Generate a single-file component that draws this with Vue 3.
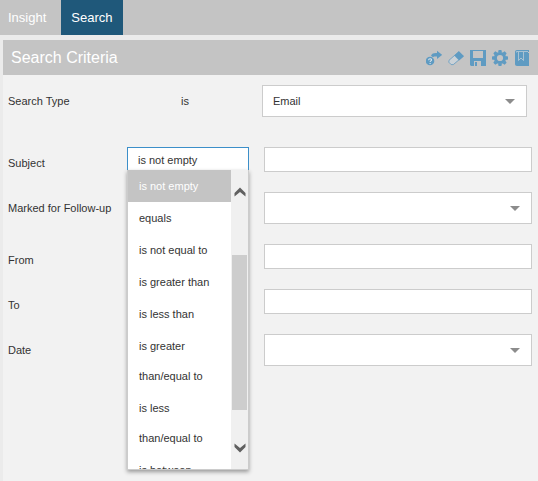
<script setup>
import { ref } from 'vue'

const tabs = ['Insight', 'Search']
const activeTab = ref('Search')
const operators = [
  'is not empty',
  'equals',
  'is not equal to',
  'is greater than',
  'is less than',
  'is greater\nthan/equal to',
  'is less\nthan/equal to',
  'is between',
]
const operator = ref('is not empty')
const searchType = ref('Email')
const fields = ref([
  { id: 'subject', label: 'Subject', kind: 'text', value: '', operator: true },
  { id: 'followup', label: 'Marked for Follow-up', kind: 'select', value: '' },
  { id: 'from', label: 'From', kind: 'text', value: '' },
  { id: 'to', label: 'To', kind: 'text', value: '' },
  { id: 'date', label: 'Date', kind: 'select', value: '' },
])
const list = ref(null)
const scroll = (step) => list.value.scrollBy(0, step)
const teeth = [0, 45, 90, 135, 180, 225, 270, 315]
</script>

<template>
  <div class="page">
    <nav class="tabs">
      <button
        v-for="tab in tabs"
        :key="tab"
        type="button"
        class="tab"
        :class="{ active: tab === activeTab }"
        @click="activeTab = tab"
      >{{ tab }}</button>
    </nav>

    <main class="panel">
      <header class="panel-head">
        <h1>Search Criteria</h1>
        <div class="tools">
          <button type="button" class="tool" aria-label="Run query">
            <svg viewBox="0 0 16 16">
              <circle cx="4" cy="11" r="4.300" fill="#5f9bc2" />
              <path d="M2.600 10.200c0-2 2.900-1.800 2.900-.3 0 .9-1.400 1-1.400 2M4.100 12.900v1" fill="none" stroke="#dce5eb" stroke-width="1.100" />
              <path d="M5 5.800C5.800 3.600 7.300 3 10 3h1V.8l5.200 4.100L11 9V6.500H9c-1 0-1.500.2-2 .7z" fill="#5f9bc2" />
            </svg>
          </button>
          <button type="button" class="tool" aria-label="Clear">
            <svg viewBox="0 0 16 16">
              <path d="M1 10.300 10.800 1.700 15.300 6.200 5.300 14.600H3.200L.8 12.200z" fill="#cbd2d7" stroke="#5f9bc2" stroke-width=".8" stroke-linejoin="round" />
              <path d="M6.200 5.600 11 1.300l4.900 4.900-4.800 4.200z" fill="#5f9bc2" />
            </svg>
          </button>
          <button type="button" class="tool" aria-label="Save">
            <svg viewBox="0 0 16 16">
              <path fill-rule="evenodd" d="M0 0h16v16H1L0 15zM3 1v7h10V1zM4 11v5h7v-5zM5 12h2v4H5z" fill="#5f9bc2" />
            </svg>
          </button>
          <button type="button" class="tool" aria-label="Settings">
            <svg viewBox="0 0 16 16">
              <circle cx="8" cy="8" r="4.600" fill="none" stroke="#5f9bc2" stroke-width="3" />
              <path
                v-for="angle in teeth"
                :key="angle"
                d="M6 2.600 6.600 0h2.800l.6 2.600z"
                :transform="`rotate(${angle} 8 8)`"
                fill="#5f9bc2"
              />
            </svg>
          </button>
          <button type="button" class="tool" aria-label="Saved searches">
            <svg viewBox="0 0 16 16">
              <path d="M3 0h12v2h-1v1h1v13H3c-1.200 0-2-.8-2-2V2c0-1.200.8-2 2-2z" fill="#5f9bc2" />
              <path d="M2.500 2.500v-1H14M4.500 2v8.500L7 8l2.500 2.500V2" fill="none" stroke="#bccbd6" stroke-width=".8" />
            </svg>
          </button>
        </div>
      </header>

      <form class="criteria" @submit.prevent>
        <div class="row type-row">
          <label class="label" for="type">Search Type</label>
          <span class="label fixed-operator">is</span>
          <div class="select-box">
            <select id="type" v-model="searchType" class="control select">
              <option>Email</option>
            </select>
          </div>
        </div>

        <div v-for="field in fields" :key="field.id" class="row">
          <label class="label" :for="field.id">{{ field.label }}</label>
          <div class="operator">
            <template v-if="field.operator">
              <input
                v-model="operator"
                class="control operator-input"
                type="text"
                role="combobox"
                aria-label="Subject operator"
                aria-expanded="true"
                aria-controls="operators"
              />
              <div class="menu">
                <ul id="operators" ref="list" class="options" role="listbox">
                  <li
                    v-for="option in operators"
                    :key="option"
                    class="option"
                    :class="{ selected: option === operator }"
                    role="option"
                    :aria-selected="option === operator"
                    @click="operator = option"
                  >{{ option }}</li>
                </ul>
                <div class="scrollbar">
                  <button type="button" class="scroll-button" aria-label="Scroll up" @click="scroll(-32)">
                    <svg viewBox="0 0 12 10"><path d="M.5 9.500V6L6 .5 11.500 6v3.500L6 5z" fill="#606060" /></svg>
                  </button>
                  <div class="track"><div class="thumb"></div></div>
                  <button type="button" class="scroll-button" aria-label="Scroll down" @click="scroll(32)">
                    <svg viewBox="0 0 12 10"><path d="M.5 .5V4L6 9.500 11.500 4V.5L6 5z" fill="#606060" /></svg>
                  </button>
                </div>
              </div>
            </template>
          </div>
          <input v-if="field.kind === 'text'" :id="field.id" v-model="field.value" class="control" type="text" />
          <div v-else class="select-box">
            <select :id="field.id" v-model="field.value" class="control select">
              <option value=""></option>
            </select>
          </div>
        </div>
      </form>
    </main>
  </div>
</template>

<style>
body {
  margin: 0;
  background: #ebebeb;
}
</style>

<style scoped>
.page {
  display: flex;
  flex-direction: column;
  min-height: 100vh;
  font-family: "Liberation Sans", Arial, sans-serif;
  font-size: 11px;
  color: #333;
}

.page * {
  box-sizing: border-box;
}

button {
  padding: 0;
  border: 0;
  background: none;
  font: inherit;
  cursor: pointer;
}

.tabs {
  display: flex;
  gap: 5px;
  height: 35px;
  background: #c4c4c4;
}

.tab {
  padding: 0 10px;
  color: #fff;
  font-size: 13px;
}

.tab:first-child {
  padding-left: 8px;
}

.tab.active {
  background: #1f587a;
}

.panel {
  flex: 1;
  margin: 5px 0 0 3px;
  background: #f2f2f2;
}

.panel-head {
  display: flex;
  align-items: center;
  justify-content: space-between;
  height: 35px;
  padding: 0 8px;
  background: #c4c4c4;
}

h1 {
  margin: 0;
  color: #fff;
  font-size: 16px;
  font-weight: 400;
}

.tools {
  display: flex;
  gap: 6px;
}

.tool,
.tool svg {
  display: block;
  width: 16px;
  height: 16px;
}

.criteria {
  display: flex;
  flex-direction: column;
  gap: 20px;
  padding: 10px 6px 10px 5px;
}

.row {
  display: grid;
  grid-template-columns: 119px 122px 1fr;
  align-items: start;
}

.row > :last-child {
  margin-left: 15px;
}

.type-row {
  grid-template-columns: 173px 66px 1fr;
  margin: 0 5px 10px 0;
}

.label {
  padding-top: 8px;
  line-height: 16px;
}

.operator {
  position: relative;
}

.control {
  display: block;
  width: 100%;
  height: 25px;
  padding: 0 10px;
  border: 1px solid #ccc;
  border-radius: 0;
  outline: 0;
  background: #fff;
  color: #333;
  font: inherit;
}

.row > input.control {
  width: calc(100% - 15px);
}

.select-box {
  position: relative;
}

.select-box::after {
  content: "";
  position: absolute;
  top: 14px;
  right: 12px;
  border: 5px solid transparent;
  border-top-color: #8c8c8c;
  border-bottom: 0;
  pointer-events: none;
}

.select {
  height: 32px;
  appearance: none;
}

.operator-input {
  border-color: #3c8fc9;
}

.menu {
  position: absolute;
  top: 23px;
  left: 0;
  z-index: 1;
  display: flex;
  width: 100%;
  height: 300px;
  border: solid #ccc;
  border-width: 0 1px 1px;
  background: #fff;
  box-shadow: 0 2px 4px #999;
}

.options {
  flex: 1;
  margin: 0;
  padding: 0;
  overflow: hidden;
  list-style: none;
}

.option {
  padding: 1px 11px;
  line-height: 30px;
  white-space: pre;
}

.option.selected {
  background: #c4c4c4;
  color: #fff;
}

.scrollbar {
  display: flex;
  flex-direction: column;
  width: 17px;
  padding: 13px 1px;
  background: #f0f0f0;
}

.scroll-button {
  display: grid;
  place-items: center;
  height: 17px;
}

.scroll-button svg {
  width: 12px;
  height: 10px;
}

.track {
  flex: 1;
  padding-top: 55px;
}

.thumb {
  height: 155px;
  background: #cdcdcd;
}
</style>
